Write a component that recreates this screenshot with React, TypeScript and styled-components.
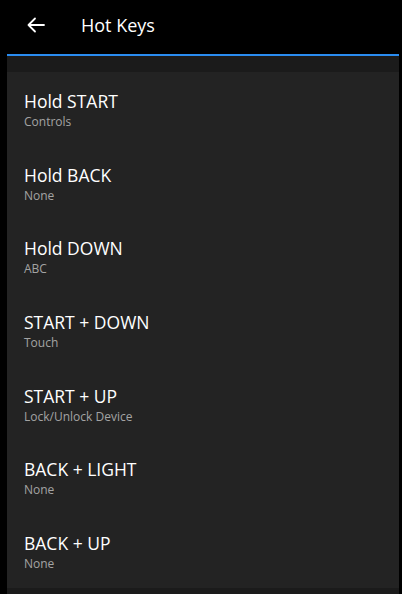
import React from "react";
import styled, { createGlobalStyle } from "styled-components";

const Global = createGlobalStyle`
  html, body { margin: 0; padding: 0; background: #000; }
  body { font-family: "Open Sans", "Noto Sans", sans-serif; color: #fff; }
`;

const Page = styled.div`
  width: 402px;
  height: 594px;
  background: #000;
  display: flex;
  flex-direction: column;
  overflow: hidden;
`;

const Header = styled.header`
  height: 54px;
  display: flex;
  align-items: center;
  padding-left: 27px;
  padding-bottom: 4px;
  box-sizing: border-box;
`;

const BackButton = styled.button`
  background: none;
  border: 0;
  padding: 0;
  width: 18px;
  height: 18px;
  display: flex;
  align-items: center;
  justify-content: center;
  color: #fff;
`;

const Title = styled.h1`
  margin: 0 0 0 36px;
  font-size: 18px;
  font-weight: 500;
  line-height: 24px;
`;

const Panel = styled.main`
  margin: 0 3px 0 7px;
  border-top: 2px solid #2a8cf0;
  background: #1b1b1b;
  display: flex;
  flex-direction: column;
  padding-top: 16px;
  flex: 1;
`;

const List = styled.ul`
  list-style: none;
  margin: 0;
  padding: 0;
  background: #232323;
  height: 516px;
  display: flex;
  flex-direction: column;
`;

const Item = styled.li`
  flex: 1;
  display: flex;
  flex-direction: column;
  justify-content: center;
  gap: 3px;
  padding: 3px 0 0 17px;
  box-sizing: border-box;
`;

const ItemTitle = styled.div`
  font-size: 17.5px;
  line-height: 20px;
  color: #fff;
`;

const ItemSub = styled.div`
  font-size: 12px;
  line-height: 16px;
  color: #a3a3a3;
`;

const items = [
  ["Hold START", "Controls"],
  ["Hold BACK", "None"],
  ["Hold DOWN", "ABC"],
  ["START + DOWN", "Touch"],
  ["START + UP", "Lock/Unlock Device"],
  ["BACK + LIGHT", "None"],
  ["BACK + UP", "None"],
];

export default function App() {
  return (
    <Page>
      <Global />
      <Header>
        <BackButton aria-label="Back">
          <svg width="18" height="16" viewBox="0 0 18 16" fill="none" stroke="#fff" strokeWidth="1.8" strokeLinecap="round" strokeLinejoin="round">
            <path d="M17 8H1.5M8 1.5L1.5 8L8 14.5" />
          </svg>
        </BackButton>
        <Title>Hot Keys</Title>
      </Header>
      <Panel>
        <List>
          {items.map(([t, s]) => (
            <Item key={t}>
              <ItemTitle>{t}</ItemTitle>
              <ItemSub>{s}</ItemSub>
            </Item>
          ))}
        </List>
      </Panel>
    </Page>
  );
}
